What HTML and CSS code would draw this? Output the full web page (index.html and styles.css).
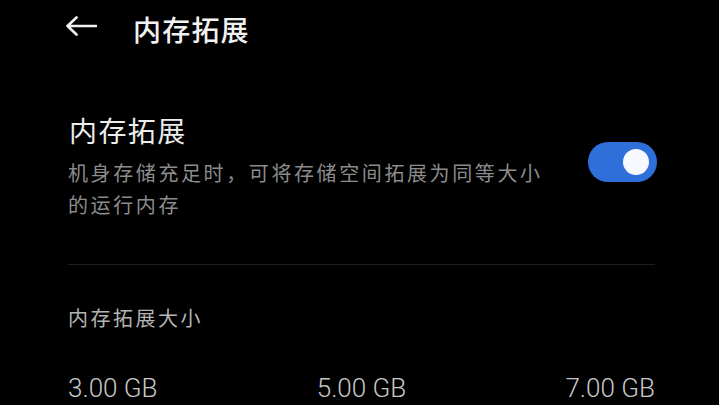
FILE: index.html
```html
<!DOCTYPE html>
<html lang="zh-CN">
<head>
<meta charset="utf-8">
<link rel="stylesheet" href="styles.css">
</head>
<body>
<div class="page">
  <header class="topbar">
    <svg class="back" viewBox="0 0 31 20" width="31" height="20">
      <path d="M1.5 10 H30 M10.5 1.5 L1.5 10 L10.5 18.5" fill="none" stroke="#f2f2f2" stroke-width="2.6" stroke-linecap="round" stroke-linejoin="round"/>
    </svg>
    <h1 class="top-title">内存拓展</h1>
  </header>

  <section class="setting">
    <div class="setting-text">
      <div class="setting-title">内存拓展</div>
      <div class="setting-desc">机身存储充足时，可将存储空间拓展为同等大小<br>的运行内存</div>
    </div>
    <div class="toggle"><div class="knob"></div></div>
  </section>

  <div class="divider"></div>

  <div class="size-label">内存拓展大小</div>

  <div class="size-options">
    <span>3.00 GB</span>
    <span>5.00 GB</span>
    <span>7.00 GB</span>
  </div>
</div>
</body>
</html>
```
FILE: styles.css
```css
html, body {
  margin: 0;
  padding: 0;
  background: #000;
}
body {
  width: 719px;
  height: 405px;
  overflow: hidden;
  font-family: "Noto Sans CJK SC", "Noto Sans", sans-serif;
  color: #eee;
}
.page {
  padding: 0 64px 0 68px;
}
.topbar {
  display: flex;
  align-items: center;
  height: 58px;
  margin-left: -2px;
}
.back {
  display: block;
  margin-bottom: 6px;
}
.top-title {
  margin: 0 0 0 36px;
  font-size: 28px;
  font-weight: 500;
  letter-spacing: 1.2px;
  color: #f2f2f2;
  line-height: 40px;
}
.setting {
  display: flex;
  align-items: center;
  justify-content: space-between;
  margin-top: 52px;
}
.setting-title {
  font-size: 28px;
  line-height: 40px;
  letter-spacing: 1.4px;
  color: #ececec;
  margin-left: 1px;
}
.setting-desc {
  margin-top: 7px;
  font-size: 20px;
  line-height: 32px;
  letter-spacing: 2.6px;
  color: #8c8c8c;
}
.toggle {
  width: 69px;
  height: 40px;
  border-radius: 20px;
  background: #2f6fd9;
  margin-right: -2px;
  margin-bottom: 7px;
  display: flex;
  align-items: center;
  justify-content: flex-end;
  padding-right: 8px;
  box-sizing: border-box;
}
.knob {
  width: 26px;
  height: 26px;
  border-radius: 50%;
  background: #f7f9ff;
}
.divider {
  height: 1px;
  background: #1c1c1c;
  margin-top: 43px;
}
.size-label {
  margin-top: 39px;
  font-size: 20px;
  line-height: 28px;
  letter-spacing: 2.5px;
  color: #b4b4b4;
}
.size-options {
  display: flex;
  justify-content: space-between;
  margin-top: 40px;
  font-family: Roboto, "Liberation Sans", sans-serif;
  font-weight: 300;
  font-size: 26px;
  line-height: 32px;
  color: #c8c8c8;
}
```
